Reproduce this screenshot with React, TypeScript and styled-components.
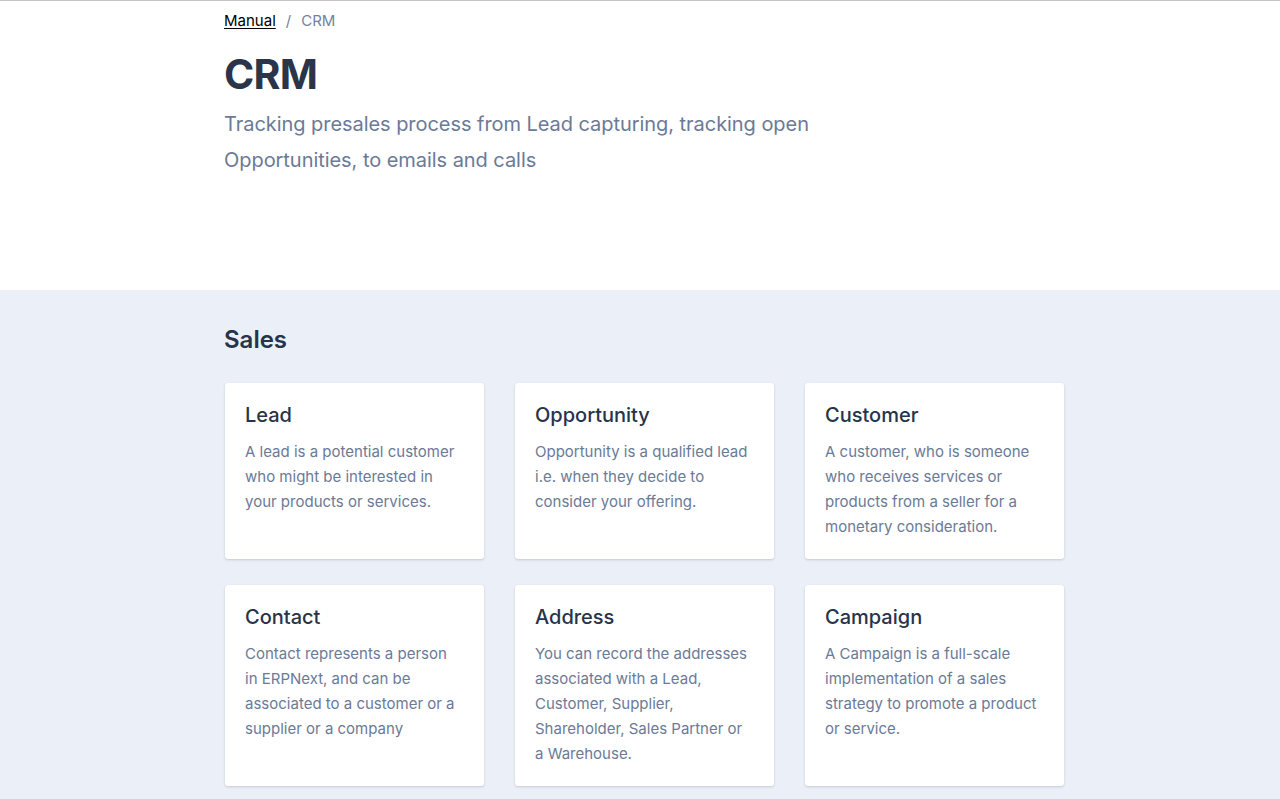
import React from "react";
import styled, { createGlobalStyle } from "styled-components";

const Global = createGlobalStyle`
  html, body { margin: 0; padding: 0; background: #fff; }
  body { font-family: Inter, "Noto Sans", sans-serif; -webkit-font-smoothing: antialiased; }
  * { box-sizing: border-box; }
`;

const Page = styled.div`
  border-top: 1px solid #c4c4c4;
`;

const Hero = styled.header`
  height: 289px;
  background: #fff;
`;

const Container = styled.div`
  width: 840px;
  margin-left: 224px;
`;

const Crumbs = styled.nav`
  display: flex;
  align-items: center;
  gap: 10px;
  padding-top: 10px;
  font-size: 15px;
  line-height: 20px;
  color: #74829c;
`;

const CrumbLink = styled.a`
  color: #000;
  text-decoration: underline;
  text-underline-offset: 2px;
`;

const Title = styled.h1`
  margin: 17px 0 0;
  font-size: 41px;
  line-height: 52px;
  font-weight: 700;
  color: #2a3549;
  letter-spacing: -0.8px;
`;

const Subtitle = styled.p`
  margin: 6px 0 0;
  width: 600px;
  font-size: 20px;
  line-height: 36px;
  color: #6b7a96;
  letter-spacing: -0.05px;
`;

const Section = styled.section`
  background: #ebf0f8;
  padding: 34px 0 40px;
`;

const SectionTitle = styled.h2`
  margin: 0 0 27px;
  font-size: 24px;
  line-height: 32px;
  font-weight: 600;
  color: #27334a;
`;

const Grid = styled.div`
  display: grid;
  grid-template-columns: repeat(3, 259px);
  column-gap: 31px;
  row-gap: 26px;
  padding-left: 1px;
`;

const Card = styled.div`
  background: #fff;
  border-radius: 3px;
  padding: 20px 24px 20px 20px;
  box-shadow: 0 1px 3px rgba(30, 45, 80, 0.14), 0 1px 2px rgba(30, 45, 80, 0.06);
`;

const CardTitle = styled.h3`
  margin: 0 0 11px;
  font-size: 20px;
  line-height: 25px;
  font-weight: 500;
  color: #27334a;
`;

const CardText = styled.p`
  margin: 0;
  font-size: 15px;
  line-height: 25px;
  color: #6b7a96;
`;

const items = [
  { t: "Lead", d: "A lead is a potential customer who might be interested in your products or services." },
  { t: "Opportunity", d: "Opportunity is a qualified lead i.e. when they decide to consider your offering." },
  { t: "Customer", d: "A customer, who is someone who receives services or products from a seller for a monetary consideration." },
  { t: "Contact", d: "Contact represents a person in ERPNext, and can be associated to a customer or a supplier or a company" },
  { t: "Address", d: "You can record the addresses associated with a Lead, Customer, Supplier, Shareholder, Sales Partner or a Warehouse." },
  { t: "Campaign", d: "A Campaign is a full-scale implementation of a sales strategy to promote a product or service." },
];

export default function App() {
  return (
    <Page>
      <Global />
      <Hero>
        <Container>
          <Crumbs>
            <CrumbLink href="#">Manual</CrumbLink>
            <span>/</span>
            <span>CRM</span>
          </Crumbs>
          <Title>CRM</Title>
          <Subtitle>Tracking presales process from Lead capturing, tracking open Opportunities, to emails and calls</Subtitle>
        </Container>
      </Hero>
      <Section>
        <Container>
          <SectionTitle>Sales</SectionTitle>
          <Grid>
            {items.map((i) => (
              <Card key={i.t}>
                <CardTitle>{i.t}</CardTitle>
                <CardText>{i.d}</CardText>
              </Card>
            ))}
          </Grid>
        </Container>
      </Section>
    </Page>
  );
}
